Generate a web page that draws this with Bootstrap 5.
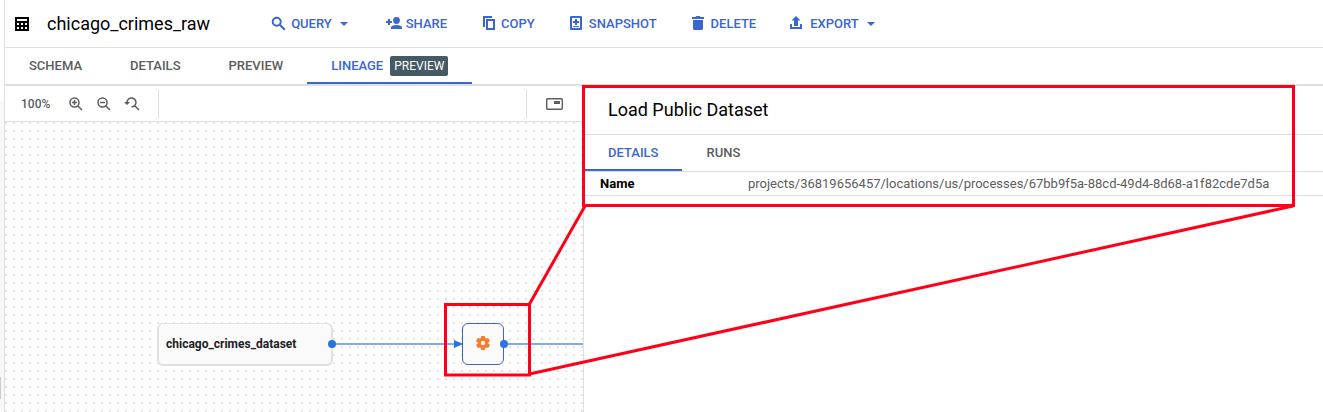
<!DOCTYPE html>
<html lang="en">
<head>
<meta charset="utf-8">
<meta name="viewport" content="width=device-width, initial-scale=1">
<title>chicago_crimes_raw</title>
<link href="https://cdn.jsdelivr.net/npm/bootstrap@5.3.0/dist/css/bootstrap.min.css" rel="stylesheet">
<style>
:root { --line: #dfdfdf; --blue: #3a66d0; --grey: #5c5c5c; }
body { font-family: Roboto, sans-serif; font-size: 13px; line-height: 20px; color: #000; }
svg { display: block; fill: currentColor; }
.rail { width: 5px; background: linear-gradient(#fff 101px, #f8f8f8 101px); border-right: 1px solid var(--line); position: relative; }
.rail-thumb { position: absolute; left: 0; top: 377px; width: 1px; height: 22px; background: #ccc; }
.topbar { height: 48px; border-bottom: 1px solid var(--line); padding: 0 10px; }
.page-title { font-size: 18px; line-height: 24px; font-weight: 400; margin: 0 61px 0 18px; }
.actions { gap: 34px; }
.tool { border: 0; background: none; padding: 0; display: flex; align-items: center; gap: 4px; color: var(--blue); font-weight: 500; }
.tabs { height: 38px; border-bottom: 2px solid var(--line); }
.tab-link { display: flex; align-items: center; gap: 7px; padding: 2px 24px 0; height: 36px; color: var(--grey); font-weight: 500; text-decoration: none; border-bottom: 2px solid transparent; }
.tab-link.active { color: var(--blue); border-bottom-color: var(--blue); }
.tag { background: #455a64; color: #fff; font-size: 12px; line-height: 20px; padding: 0 4px; border-radius: 2px; font-weight: 400; }
.graph { flex: 0 0 579px; border-right: 1px solid var(--line); }
.graph-tools { height: 36px; border-bottom: 1px solid var(--line); color: var(--grey); padding-left: 16px; }
.graph-tools .tool { color: var(--grey); }
.zooms { width: 138px; height: 28px; border-right: 1px solid var(--line); gap: 12px; }
.zoom-level { width: 35px; font-size: 12px; font-weight: 500; }
.map-toggle { width: 57px; height: 28px; border-left: 1px solid var(--line); }
.board { position: relative; overflow: hidden; min-height: 290px; background: conic-gradient(from 0deg at 2px 2px, transparent 270deg, #e4e4e4 270deg) 0 0 / 8px 8px; }
.node { position: absolute; display: flex; align-items: center; background: #fafafa; border-radius: 6px; }
.node-data { left: 152px; top: 201px; width: 176px; height: 43px; border: 2px solid #e0e0e0; border-top-width: 1px; padding-left: 7px; font-size: 12px; font-weight: 700; color: #202124; }
.node-process { left: 457px; top: 201px; width: 42px; height: 42px; border: 1px solid var(--blue); justify-content: center; color: #fa7b2a; }
.edges { position: absolute; left: 0; top: 0; }
.panel-title { height: 49px; font-size: 18px; line-height: 48px; font-weight: 400; border-bottom: 1px solid var(--line); padding-left: 24px; margin: 0; }
.panel-tabs { height: 37px; border-bottom: 1px solid var(--line); }
.props { width: 100%; border-bottom: 1px solid var(--line); }
.props th { width: 164px; padding: 2px 0 1px 16px; font-weight: 700; }
.props td { padding: 2px 0 1px; color: var(--grey); }
.callout { position: absolute; left: 0; top: 0; pointer-events: none; }
</style>
</head>
<body>
<div class="d-flex min-vh-100 position-relative overflow-hidden">
  <div class="rail flex-shrink-0"><div class="rail-thumb"></div></div>
  <main class="d-flex flex-column flex-grow-1">
    <header class="topbar d-flex align-items-center">
      <svg width="14" height="14" viewBox="0 0 14 14" fill="#202124" fill-rule="evenodd"><path d="M0 0h14v14H0zM2 2v2h10V2zM2 6v2h2V6zM6 6v2h2V6zM10 6v2h2V6zM2 10v2h2v-2zM6 10v2h2v-2zM10 10v2h2v-2z"/></svg>
      <h1 class="page-title">chicago_crimes_raw</h1>
      <div class="actions d-flex">
        <button class="tool" type="button"><svg width="16" height="16" viewBox="0 0 16 16"><g fill="none" stroke="currentColor" stroke-width="2"><circle cx="5.7" cy="5.7" r="4"/><path d="M8.8 8.8l5 5"/></g></svg>QUERY<svg width="16" height="16" viewBox="0 0 16 16"><path d="M4 6h8l-4 4z"/></svg></button>
        <button class="tool" type="button"><svg width="16" height="16" viewBox="0 0 16 16"><circle cx="10.5" cy="4.500" r="3.4"/><path d="M5 13v-1.5C5 9.700 8.500 9 10.500 9S16 9.700 16 11.500V13zM2 3h2v2h2v2H4v2H2V7H0V5h2z"/></svg>SHARE</button>
        <button class="tool" type="button"><svg width="16" height="16" viewBox="0 0 16 16"><path d="M2 0h9v2H4v9H2zM5 3h9v11H5zM7 5v7h5V5z" fill-rule="evenodd"/></svg>COPY</button>
        <button class="tool" type="button"><svg width="16" height="16" viewBox="0 0 16 16"><path d="M2 0h10a1 1 0 0 1 1 1v12a1 1 0 0 1-1 1H2a1 1 0 0 1-1-1V1a1 1 0 0 1 1-1zM3 2v10h8V2zM6 3h2v2h2v2H8v2H6V7H4V5h2zM4 10h6v1H4z" fill-rule="evenodd"/></svg>SNAPSHOT</button>
        <button class="tool" type="button"><svg width="16" height="16" viewBox="0 0 16 16"><path d="M1 1h3.500l1-1h3l1 1H13v2H1zM2 4h10v8.500a1.500 1.500 0 0 1-1.500 1.500h-7A1.500 1.500 0 0 1 2 12.500z"/></svg>DELETE</button>
        <button class="tool" type="button"><svg width="16" height="16" viewBox="0 0 16 16"><path d="M6 0l4.500 4.500H8V10H4V4.500H1.500zM0 8h2v3h8V8h2v5H0z"/></svg>EXPORT<svg width="16" height="16" viewBox="0 0 16 16"><path d="M4 6h8l-4 4z"/></svg></button>
      </div>
    </header>
    <nav class="tabs d-flex">
      <a class="tab-link" href="#">SCHEMA</a>
      <a class="tab-link" href="#">DETAILS</a>
      <a class="tab-link" href="#">PREVIEW</a>
      <a class="tab-link active" href="#">LINEAGE <span class="tag">PREVIEW</span></a>
    </nav>
    <div class="d-flex flex-grow-1">
      <section class="graph d-flex flex-column">
        <div class="graph-tools d-flex align-items-center justify-content-between">
          <div class="zooms d-flex align-items-center">
            <span class="zoom-level">100%</span>
            <button class="tool" type="button" aria-label="Zoom in"><svg width="16" height="16" viewBox="0 0 16 16"><g fill="none" stroke="currentColor" stroke-width="1.500"><circle cx="6.500" cy="6.500" r="4.500"/><path d="M9.700 9.700l4.300 4.300M4 6.500h5M6.500 4v5"/></g></svg></button>
            <button class="tool" type="button" aria-label="Zoom out"><svg width="16" height="16" viewBox="0 0 16 16"><g fill="none" stroke="currentColor" stroke-width="1.500"><circle cx="6.500" cy="6.500" r="4.500"/><path d="M9.700 9.700l4.300 4.300M4 6.500h5"/></g></svg></button>
            <button class="tool" type="button" aria-label="Reset zoom"><svg width="16" height="16" viewBox="0 0 16 16"><path d="M3 7A4.500 4.500 0 1 1 7.500 11M10.700 9.700l4.300 4.300" fill="none" stroke="currentColor" stroke-width="1.500"/><path d="M0 6h6L3 9z"/></svg></button>
          </div>
          <div class="map-toggle d-flex align-items-center justify-content-center">
            <button class="tool" type="button" aria-label="Toggle minimap"><svg width="18" height="12" viewBox="0 0 18 12"><rect x=".7" y=".7" width="15.600" height="10.600" rx="1" fill="none" stroke="currentColor" stroke-width="1.400"/><path d="M8 3h6v3H8z"/></svg></button>
          </div>
        </div>
        <div class="board flex-grow-1">
          <div class="node node-data">chicago_crimes_dataset</div>
          <div class="node node-process"><svg width="16" height="16" viewBox="0 1 16 16"><path fill-rule="evenodd" d="M6.200 1h3.600l.4 2 1 .6 2-.7 1.800 3.100L13.400 7.300v1.400L15 10l-1.800 3.100-2-.7-1 .6-.4 2H6.200l-.4-2-1-.6-2 .7L1 10l1.600-1.300V7.300L1 6l1.800-3.100 2 .7 1-.6zM8 5.800a2.200 2.200 0 1 0 0 4.400 2.200 2.200 0 0 0 0-4.400z"/></svg></div>
          <svg class="edges" width="578" height="290" viewBox="0 0 578 290"><path d="M327 222h130M499 222h79" stroke="#7faaf0" stroke-width="2"/><g fill="#2a72e5"><circle cx="327" cy="222" r="4"/><circle cx="499" cy="222" r="4"/><path d="M449 218l9 4-9 4z"/></g></svg>
        </div>
      </section>
      <aside class="flex-grow-1">
        <h2 class="panel-title">Load Public Dataset</h2>
        <nav class="panel-tabs d-flex">
          <a class="tab-link active" href="#">DETAILS</a>
          <a class="tab-link" href="#">RUNS</a>
        </nav>
        <table class="props"><tbody><tr><th scope="row">Name</th><td>projects/36819656457/locations/us/processes/67bb9f5a-88cd-49d4-8d68-a1f82cde7d5a</td></tr></tbody></table>
      </aside>
    </div>
  </main>
  <svg class="callout" width="1323" height="412" viewBox="0 0 1323 412" aria-hidden="true"><g fill="none" stroke="#ff0019" stroke-width="3"><path d="M583.500 86.500h710v119h-710zM445.500 304.500h84v70.500h-84zM585 206L529.500 304M529.500 374L1293 206"/></g></svg>
</div>
<script src="https://cdn.jsdelivr.net/npm/bootstrap@5.3.0/dist/js/bootstrap.bundle.min.js"></script>
</body>
</html>
